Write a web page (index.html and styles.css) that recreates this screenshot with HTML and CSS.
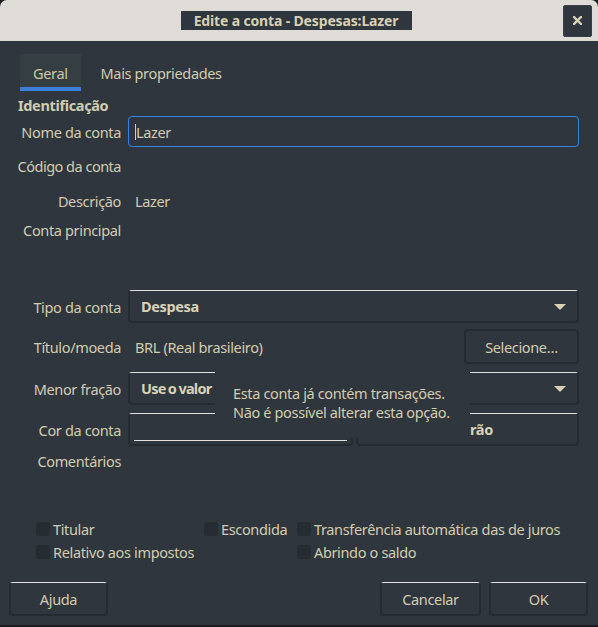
FILE: index.html
```html
<!DOCTYPE html>
<html lang="pt">
<head>
<meta charset="utf-8">
<title>Edite a conta - Despesas:Lazer</title>
<link rel="stylesheet" href="styles.css">
</head>
<body>
<div class="window">
  <header class="titlebar">
    <div class="title">Edite a conta - Despesas:Lazer</div>
    <div class="close"><svg width="9" height="9" viewBox="0 0 9 9"><path d="M1 1 L8 8 M8 1 L1 8" stroke="#d9d1b6" stroke-width="2.4" stroke-linecap="square"/></svg></div>
  </header>
  <main class="content">
    <nav class="tabs">
      <div class="tab active">Geral</div>
      <div class="tab">Mais propriedades</div>
    </nav>
    <section class="form">
      <div class="section-title">Identificação</div>
      <div class="row r-nome"><div class="label">Nome da conta</div><div class="entry focused"><span class="caret"></span>Lazer</div></div>
      <div class="row r-codigo"><div class="label">Código da conta</div><div class="value"></div></div>
      <div class="row r-desc"><div class="label">Descrição</div><div class="value">Lazer</div></div>
      <div class="row r-principal"><div class="label">Conta principal</div><div class="value"></div></div>
      <div class="row r-tipo"><div class="label">Tipo da conta</div><div class="combo"><span>Despesa</span><svg class="arrow" width="12" height="6" viewBox="0 0 12 6"><path d="M0 0 H12 L6 6 Z" fill="#d9d1b6"/></svg></div></div>
      <div class="row r-titulo"><div class="label">Título/moeda</div><div class="value grow">BRL (Real brasileiro)</div><div class="btn select">Selecione…</div></div>
      <div class="row r-menor"><div class="label">Menor fração</div><div class="combo"><span class="tight">Use o valor</span><svg class="arrow" width="12" height="6" viewBox="0 0 12 6"><path d="M0 0 H12 L6 6 Z" fill="#d9d1b6"/></svg></div></div>
      <div class="row r-cor"><div class="label">Cor da conta</div><div class="colorbtn"><span class="swatch"></span></div><div class="btn default"><span class="default-label">rão</span></div></div>
      <div class="row r-coment"><div class="label">Comentários</div><div class="value"></div></div>
    </section>
    <section class="checks">
      <label class="check"><span class="box"></span>Titular</label>
      <label class="check"><span class="box"></span>Escondida</label>
      <label class="check"><span class="box"></span>Transferência automática das de juros</label>
      <label class="check"><span class="box"></span>Relativo aos impostos</label>
      <span></span>
      <label class="check"><span class="box"></span>Abrindo o saldo</label>
    </section>
    <footer class="actions">
      <div class="btn action">Ajuda</div>
      <div class="spacer"></div>
      <div class="btn action cancel">Cancelar</div>
      <div class="btn action ok">OK</div>
    </footer>
  </main>
  <div class="tooltip">Esta conta já contém transações.<br>Não é possível alterar esta opção.</div>
</div>
</body>
</html>
```
FILE: styles.css
```css
* { box-sizing: border-box; }
html, body { margin: 0; padding: 0; }
body {
  background: #1b1e21;
  font-family: "Noto Sans", "DejaVu Sans", sans-serif;
  font-size: 14.5px;
  color: #d3ccb1;
  letter-spacing: -0.35px;
}
.window {
  position: relative;
  width: 598px;
  height: 625px;
  background: #2f363d;
  display: flex;
  flex-direction: column;
  border-radius: 7px 7px 0 0;
  overflow: hidden;
}
.titlebar {
  height: 41px;
  flex: none;
  background: #dfdbd6;
  display: grid;
  grid-template-columns: 1fr auto 1fr;
  align-items: center;
  padding-right: 6px;
}
.title {
  grid-column: 2;
  background: #2f363d;
  height: 19px;
  width: 231px;
  display: flex;
  align-items: center;
  justify-content: center;
  font-weight: bold;
  font-size: 14px;
  letter-spacing: -0.15px;
  color: #d8d0b4;
}
.close {
  grid-column: 3;
  justify-self: end;
  width: 29px;
  height: 32px;
  background: #2f363d;
  border: 1px solid #3a4047;
  border-radius: 2px;
  display: flex;
  align-items: center;
  justify-content: center;
}
.content {
  flex: 1;
  display: flex;
  flex-direction: column;
  padding: 13px 19px 0 18px;
}
.tabs {
  display: flex;
  height: 37px;
  margin-left: 2px;
  gap: 7px;
}
.tab {
  padding: 0 13px;
  display: flex;
  align-items: center;
  height: 37px;
  color: #d3ccb1;
}
.tab.active {
  background: #353e43;
  border-bottom: 4px solid #3a80d9;
  padding-top: 4px;
  color: #cfc6a4;
}
.form {
  margin-top: 6px;
  display: flex;
  flex-direction: column;
}
.section-title {
  font-weight: bold;
  height: 17px;
  line-height: 17px;
}
.row {
  display: flex;
  align-items: center;
}
.label {
  width: 103px;
  flex: none;
  display: flex;
  justify-content: flex-end;
  white-space: nowrap;
  margin-right: 7px;
}
.r-codigo .label { letter-spacing: -0.5px; }
.value { padding-left: 7px; }
.grow { flex: 1; }
.r-nome { margin-top: 2px; height: 31px; }
.r-codigo { height: 38px; }
.r-desc { height: 32px; }
.r-principal { height: 26px; }
.r-tipo { margin-top: 47px; height: 33px; }
.r-titulo { margin-top: 6px; height: 35px; }
.r-menor { margin-top: 8px; height: 33px; }
.r-cor { margin-top: 8px; height: 33px; }
.r-coment { height: 30px; }
.entry {
  flex: 1;
  height: 31px;
  border: 1px solid #3584e4;
  border-radius: 4px;
  display: flex;
  align-items: center;
  padding-left: 6px;
}
.caret {
  width: 1px;
  height: 16px;
  background: #d3ccb1;
}
.combo {
  flex: 1;
  height: 33px;
  border: 2px solid #262b31;
  border-top: 1px solid #e4e2de;
  border-radius: 4px;
  display: flex;
  align-items: center;
  padding: 0 11px 0 11px;
  font-weight: bold;
  color: #d9d2b8;
  white-space: nowrap;
  overflow: hidden;
}
.combo span { flex: 1; }
.combo .tight { letter-spacing: -0.75px; word-spacing: -0.8px; }
.arrow { flex: none; margin-top: 1px; }
.btn {
  border: 2px solid #262b31;
  border-radius: 4px;
  display: flex;
  align-items: center;
  justify-content: center;
  color: #d3ccb1;
}
.select { width: 115px; height: 35px; }
.colorbtn {
  width: 225px;
  height: 33px;
  border: 2px solid #262b31;
  border-top: 1px solid #e4e2de;
  border-radius: 4px;
  padding: 0 4px 3px 4px;
  display: flex;
  align-items: flex-end;
}
.swatch {
  flex: 1;
  height: 1px;
  background: #e4e2de;
}
.default {
  flex: 1;
  margin-left: 3px;
  height: 33px;
  border-top: 1px solid #e4e2de;
  font-weight: bold;
  color: #d9d2b8;
  justify-content: flex-start;
  padding-left: 112px;
}
.checks {
  margin-top: 44px;
  padding-left: 18px;
  display: grid;
  grid-template-columns: 168px 93px auto;
  grid-auto-rows: 17px;
  row-gap: 6px;
}
.check {
  display: flex;
  align-items: center;
  white-space: nowrap;
}
.box {
  width: 14px;
  height: 14px;
  background: #262c31;
  border-radius: 3px;
  margin-right: 3px;
  flex: none;
}
.actions {
  display: flex;
  margin: 22px -9px 0 -9px;
  gap: 8px;
}
.spacer { flex: 1; }
.action {
  width: 99px;
  height: 34px;
  border-top: 1px solid #e4e2de;
}
.cancel { width: 101px; }
.tooltip {
  position: absolute;
  left: 215px;
  top: 371px;
  width: 255px;
  height: 67px;
  background: #2f363d;
  padding: 13px 0 0 18px;
  line-height: 19px;
  white-space: nowrap;
}
```
